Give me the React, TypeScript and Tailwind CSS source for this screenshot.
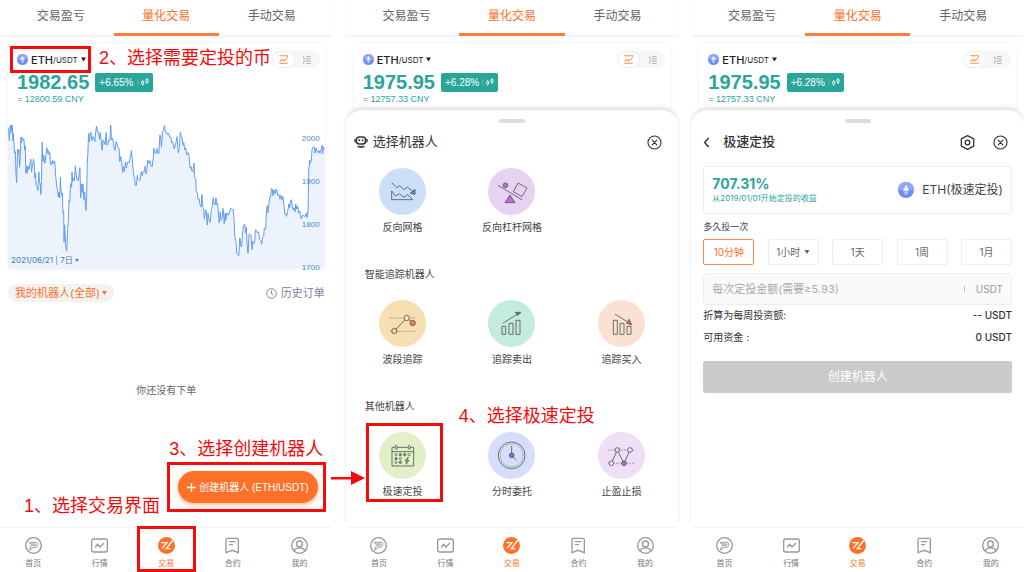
import React, { useState } from 'react';
import clsx from 'clsx';

const TABS = ['交易盈亏', '量化交易', '手动交易'];
const PRICE_LEVELS = ['2000', '1900', '1800', '1700'];
const INTERVALS = ['10分钟', '1小时', '1天', '1周', '1月'];

const PRICE_LINE =
  '22,52 24,62 26,92 29,46 31,68 33,45 35,46 36,68 37,92 38,70 40,98 42,130 44,125 46,190 48,219 50,150 51,118 53,130 55,119 57,172 59,140 61,81 63,98 65,83 68,90 70,87 72,120 74,108 76,190 78,168 80,190 82,168 85,180 88,162 91,148 93,186 96,165 99,148 101,160 103,205 105,190 107,228 110,230 112,242 115,186 117,215 119,222 121,254 123,215 125,97 127,155 130,136 133,160 136,140 139,113 142,130 144,122 146,135 148,128 150,160 153,166 156,152 158,162 160,153 163,155 166,200 169,230 172,245 174,262 176,246 178,264 180,202 182,246 184,256 186,250 188,310 190,305 191,396 193,345 196,405 199,424 202,360 204,330 206,272 208,278 210,235 212,220 214,232 215,186 217,215 220,206 222,212 225,168 228,196 231,210 234,212 236,195 239,173 241,264 244,222 246,248 248,222 251,270 253,246 257,302 259,262 261,160 263,130 265,70 267,96 270,72 272,66 275,92 278,80 281,82 284,95 286,72 289,48 292,66 295,66 298,88 300,68 303,90 306,122 309,90 312,96 315,104 318,68 320,104 323,104 326,90 329,92 332,45 334,90 337,84 340,100 343,118 345,122 348,95 351,102 354,112 357,118 359,155 362,140 365,158 368,188 370,170 373,184 376,156 379,174 383,156 388,158 391,140 394,122 397,150 399,175 402,200 404,204 406,226 409,226 412,196 414,208 418,212 420,212 424,185 427,198 430,184 434,184 435,168 438,192 441,182 443,150 447,160 450,152 453,168 457,170 460,144 462,115 465,130 468,130 471,116 474,130 477,131 480,75 482,78 485,112 488,65 491,62 494,46 496,66 500,66 503,74 506,70 510,82 513,82 516,98 519,96 523,117 526,108 529,96 532,80 534,116 536,129 539,112 542,66 544,80 547,82 549,106 552,98 555,120 558,114 561,134 565,128 568,140 571,175 574,170 577,184 580,184 583,160 585,202 588,206 590,245 593,250 595,268 598,266 600,280 604,292 607,254 609,290 612,296 614,328 618,300 620,306 623,346 625,310 629,334 632,338 635,300 638,290 641,264 644,284 647,284 649,264 652,284 654,280 657,316 659,340 662,306 665,332 668,324 670,296 672,310 674,342 677,310 679,332 682,310 686,316 689,310 693,296 697,298 701,300 704,330 706,382 709,392 712,430 715,434 718,438 721,384 725,412 727,405 730,362 733,345 736,344 738,370 741,352 743,402 746,431 749,374 752,374 755,376 758,420 760,395 763,402 766,398 768,360 771,362 774,370 778,366 781,390 784,392 787,404 790,382 793,380 795,355 799,358 802,300 804,288 806,308 808,292 811,262 814,262 817,236 819,238 821,258 824,240 827,252 830,238 833,240 836,258 839,254 842,268 845,256 848,270 851,260 854,284 857,314 860,312 862,320 865,308 869,282 872,294 874,272 877,270 879,288 882,300 885,294 888,306 890,282 893,298 896,290 899,310 902,304 904,318 907,328 910,316 914,318 918,320 922,310 924,324 927,300 929,180 932,150 934,160 937,152 939,118 943,110 946,112 948,130 951,114 954,124 957,128 960,122 963,130 966,120 969,106 971,132 973,110 975,116 977,116';

const EthIcon: React.FC<{ className?: string }> = ({ className }) => (
  <svg viewBox="0 0 24 24" className={className} aria-hidden="true">
    <circle cx="12" cy="12" r="12" fill="#6d8df8" />
    <path d="M0 12a12 12 0 0 1 24 0z" fill="#8ea6fb" />
    <path d="M12 4l4.500 8-4.500 2.500L7.500 12z" fill="#fff" fillOpacity="0.85" />
    <path d="M7.500 13.500L12 16l4.500-2.500L12 20z" fill="#fff" fillOpacity="0.7" />
  </svg>
);

const CaretIcon: React.FC<{ className?: string }> = ({ className }) => (
  <svg viewBox="0 0 10 8" className={className} fill="currentColor" aria-hidden="true">
    <path d="M0 0h10L5 8z" />
  </svg>
);

const CloseIcon: React.FC = () => (
  <svg viewBox="0 0 46 46" className="size-[15px]" fill="none" stroke="#333" strokeWidth="3.500" strokeLinecap="round">
    <circle cx="23" cy="23" r="20" />
    <path d="M16 16l14 14M30 16L16 30" />
  </svg>
);

const RobotIcon: React.FC = () => (
  <svg viewBox="0 0 40 36" className="h-[12px] w-[14px]" fill="none" stroke="#333" strokeLinecap="round" aria-hidden="true">
    <rect x="6" y="3" width="28" height="21" rx="9" strokeWidth="5" />
    <path d="M2 10v7M38 10v7" strokeWidth="4" />
    <path d="M10 31h20M14 35h12" strokeWidth="3" />
    <circle cx="15" cy="13" r="3" fill="#333" stroke="none" />
    <circle cx="25" cy="13" r="3" fill="#333" stroke="none" />
  </svg>
);

const NAV_ITEMS = [
  {
    label: '首页',
    icon: (
      <>
        <circle cx="25.500" cy="25.500" r="23.500" />
        <path d="M13 16h20c9 0 6 15-3 15h-7l-5 7h-5l7-13h11c3 0 3-4 0-4H16z" strokeWidth="3" />
      </>
    ),
  },
  {
    label: '行情',
    icon: (
      <>
        <rect x="2" y="6" width="47" height="39" rx="6" />
        <path d="M12 31l8-9 7 8 12-12" />
      </>
    ),
  },
  {
    label: '交易',
    icon: (
      <>
        <circle cx="25.500" cy="25.500" r="25.500" fill="#ff7128" stroke="none" />
        <path d="M10 17h17L12 34M45 9L25 35h12" stroke="#fff" strokeWidth="4" />
      </>
    ),
  },
  {
    label: '合约',
    icon: (
      <>
        <path d="M9 4h30a4 4 0 0 1 4 4v39l-18-7-19 7V8a4 4 0 0 1 3-4z" />
        <path d="M15 14h19M15 23h12" />
      </>
    ),
  },
  {
    label: '我的',
    icon: (
      <>
        <circle cx="25.500" cy="25.500" r="23.500" />
        <circle cx="25.500" cy="21" r="9" />
        <path d="M9 41c7-11 26-11 33 0" />
      </>
    ),
  },
];

const BottomNav: React.FC<{ marked?: boolean }> = ({ marked }) => (
  <nav className="grid h-[45px] grid-cols-5 border-t border-[#f5f5f5] bg-white">
    {NAV_ITEMS.map((item) => {
      const active = item.label === '交易';
      return (
        <a
          key={item.label}
          href="#"
          className={clsx(
            'relative flex flex-col items-center gap-[3px] pt-[9px] text-[8px] leading-[12px]',
            active ? 'text-[#ff7128]' : 'text-[#777]'
          )}
        >
          <svg viewBox="0 0 51 51" className="size-[17px]" fill="none" stroke="#999" strokeWidth="4">
            {item.icon}
          </svg>
          {item.label}
          {active && marked && <span className="absolute -top-[2px] bottom-0 inset-x-1 border-3 border-[#f50b0b]" />}
        </a>
      );
    })}
  </nav>
);

const TopTabs: React.FC = () => (
  <div className="grid h-9 grid-cols-3 border-b border-[#f3f3f3] px-2 shadow-[0_1px_3px_rgba(0,0,0,0.04)]">
    {TABS.map((tab) => (
      <button
        key={tab}
        type="button"
        className={clsx(
          'relative pb-1 text-[12px] leading-4',
          tab === '量化交易' ? 'text-[#ff7128]' : 'text-[#666]'
        )}
      >
        {tab}
        {tab === '量化交易' && <span className="absolute inset-x-0 -bottom-px h-[3px] bg-[#ff7d3a]" />}
      </button>
    ))}
  </div>
);

interface TickerProps {
  price: string;
  change: string;
  cny: string;
  marked?: boolean;
}

const Ticker: React.FC<TickerProps> = ({ price, change, cny, marked }) => (
  <div className="px-[9px] pt-[7px]">
    <div className="flex h-[17px] items-center justify-between">
      <button type="button" className="relative flex items-center text-[#222]" aria-haspopup="listbox">
        <EthIcon className="mr-[3px] size-[11px]" />
        <span className="text-[11px] leading-4 font-medium">ETH</span>
        <span className="pt-px text-[8px] leading-4">/USDT</span>
        <CaretIcon className="ml-[3px] h-[5px] w-[5px]" />
        {marked && <span className="absolute -inset-y-[5px] -right-[5px] -left-[7px] border-3 border-[#f50b0b]" />}
      </button>
      <div className="-mr-1 flex h-[17px] w-[48px] rounded-full bg-[#f6f6f6]">
        <button
          type="button"
          aria-label="走势图"
          className="flex w-[23px] items-center justify-center rounded-full border border-[#eee] bg-white"
        >
          <svg viewBox="0 0 26 26" className="size-[9px]" fill="none" stroke="#ff8a50" strokeWidth="3">
            <path d="M1 2h24v6M1 24h24M2 19l6-6 5 4 10-7" />
          </svg>
        </button>
        <button type="button" aria-label="盘口" className="flex flex-1 items-center justify-center">
          <svg viewBox="0 0 26 26" className="size-[8px]" fill="none" stroke="#aaa" strokeWidth="3">
            <path d="M2 1v7h5M10 2h15M10 9h15M1 16h24M2 25v-6M10 24h15" />
          </svg>
        </button>
      </div>
    </div>
    <div className="mt-[2px] flex h-6 items-center gap-[6px] font-['Liberation_Sans',sans-serif]">
      <span className="text-[20px] leading-6 font-bold text-[#2aa59a]">{price}</span>
      <span className="flex h-[19px] items-center gap-[3px] rounded-xs bg-[#2aa59a] px-1 text-[10px] text-white">
        {change}
        <svg viewBox="0 0 36 24" className="h-[8px] w-[12px]" fill="none" stroke="#fff" strokeWidth="3">
          <path d="M3 2v20" strokeOpacity="0.4" strokeWidth="2" />
          <rect x="14" y="10" width="6" height="9" rx="2" />
          <rect x="27" y="4" width="6" height="10" rx="2" />
          <path d="M17 6v4M17 19v4M30 0v4M30 14v4" strokeWidth="2" />
        </svg>
      </span>
    </div>
    <p className="font-['Liberation_Sans',sans-serif] text-[9px] leading-[10px] text-[#2aa59a]">= {cny} CNY</p>
  </div>
);

const Annotation: React.FC<{ className?: string; children: React.ReactNode }> = ({ className, children }) => (
  <p
    className={clsx(
      "absolute z-20 font-['Liberation_Sans','Noto_Sans_CJK_SC',sans-serif] text-[18px] leading-6 whitespace-nowrap text-[#f50b0b]",
      className
    )}
  >
    {children}
  </p>
);

const BOT_GROUPS = [
  {
    title: '',
    bots: [
      {
        name: '反向网格',
        circle: 'bg-[#cbdff6]',
        art: (
          <>
            <path d="M38 44l16 15 9-6 12 12 10-8 18 15M38 69l12 15 11-7 14 11 11-8 15 15H38z" />
            <path d="M108 64v15l-14-3z" fill="#4295f0" />
          </>
        ),
      },
      {
        name: '反向杠杆网格',
        circle: 'bg-[#e8d2f1]',
        art: (
          <>
            <path d="M30 52l73 44M90 45l27 15-15 26-26-15z" />
            <circle cx="52" cy="52" r="7" fill="#bd6ae4" />
            <path d="M66 81l15 23H51z" fill="#bd6ae4" />
          </>
        ),
      },
    ],
  },
  {
    title: '智能追踪机器人',
    bots: [
      {
        name: '波段追踪',
        circle: 'bg-[#f6dfb3]',
        art: (
          <>
            <path d="M31 54h80M31 94h80" strokeDasharray="3 2" strokeWidth="1.500" />
            <path d="M46 93l37-39 18 15" />
            <circle cx="46" cy="93" r="8" fill="#fbd48b" />
            <circle cx="83" cy="54" r="8" fill="#f8e6c4" />
            <circle cx="101" cy="69" r="8" fill="#ff7a45" />
          </>
        ),
      },
      {
        name: '追踪卖出',
        circle: 'bg-[#c3ebdf]',
        art: (
          <>
            <path d="M42 79h11v24H42zM63 70h12v33H63zM84 61h12v42H84zM44 70l50-31" />
            <path d="M82 37h17l-10 9z" fill="#2aa583" />
          </>
        ),
      },
      {
        name: '追踪买入',
        circle: 'bg-[#fbe0d4]',
        art: (
          <>
            <path d="M46 61h12v42H46zM66 70h12v33H66zM87 79h12v24H87zM51 42l49 31" />
            <path d="M93 58l8 16-15-4z" fill="#ef6a35" />
          </>
        ),
      },
    ],
  },
  {
    title: '其他机器人',
    bots: [
      {
        name: '极速定投',
        circle: 'bg-[#e2f0c9]',
        art: (
          <>
            <path d="M39 46h65v56H39zM39 59h65" />
            <rect x="49" y="40" width="6" height="12" rx="3" fill="#e2f0c9" />
            <rect x="88" y="40" width="6" height="12" rx="3" fill="#e2f0c9" />
            <g fill="#54a24b" strokeWidth="2">
              <circle cx="51" cy="68" r="3.500" fill="none" />
              <circle cx="64" cy="68" r="3.500" />
              <circle cx="77" cy="68" r="3.500" />
              <circle cx="90" cy="68" r="3.500" fill="none" />
              <circle cx="51" cy="80" r="3.500" />
              <circle cx="64" cy="80" r="3.500" fill="none" />
              <circle cx="51" cy="91" r="3.500" fill="none" />
              <circle cx="64" cy="91" r="3.500" />
            </g>
            <path d="M88 75l-10 12h6l-3 10 9-12h-6z" fill="#e2f0c9" />
          </>
        ),
      },
      {
        name: '分时委托',
        circle: 'bg-[#d6def9]',
        art: (
          <>
            <circle cx="71" cy="70" r="40" />
            <circle cx="71" cy="70" r="34" strokeDasharray="2 4" />
            <path d="M71 42v28l14 15" />
            <circle cx="71" cy="70" r="7" fill="#5b7ff5" />
          </>
        ),
      },
      {
        name: '止盈止损',
        circle: 'bg-[#eedff6]',
        art: (
          <>
            <path d="M30 54h81M30 94h81" strokeDasharray="5 3" strokeWidth="1.500" />
            <path d="M40 94l18-40 20 40 18-40" />
            <circle cx="58" cy="54" r="7" fill="#eed3f8" />
            <circle cx="96" cy="54" r="7" fill="#f4eaf9" />
            <circle cx="40" cy="94" r="7" fill="#f4eaf9" />
            <circle cx="78" cy="94" r="7" fill="#b964e0" />
          </>
        ),
      },
    ],
  },
];

const Sheet: React.FC<{ children: React.ReactNode }> = ({ children }) => (
  <section className="relative flex-1 rounded-t-2xl bg-white pt-[9px] shadow-[0_-3px_5px_-1px_rgba(0,0,0,0.14)]">
    <div className="mx-auto h-1 w-[26px] rounded-full bg-[#d9dbe6]" />
    {children}
  </section>
);

const OverviewScreen: React.FC = () => (
  <div className="flex flex-col">
    <TopTabs />
    <main className="relative flex-1 px-2 pt-2">
      <section className="relative rounded-sm shadow-[0_0_5px_rgba(0,0,0,0.06)]">
        <Ticker price="1982.65" change="+6.65%" cny="12800.59" marked />
        <Annotation className="top-[2px] left-[91px]">2、选择需要定投的币</Annotation>
        <div className="relative mt-4 h-[149px]">
          <svg viewBox="22 30 955 448" preserveAspectRatio="none" className="h-full w-full">
            <polygon points={`22,478 ${PRICE_LINE} 977,478`} fill="#ecf3fd" />
            <polyline points={PRICE_LINE} fill="none" stroke="#629bf5" strokeWidth="3" strokeLinejoin="round" />
          </svg>
          <div className="absolute top-[14px] right-[5px] flex flex-col gap-[33px] font-['Liberation_Sans',sans-serif] text-[8px] leading-[10px] text-[#5289bd]">
            {PRICE_LEVELS.map((level) => (
              <span key={level}>{level}</span>
            ))}
          </div>
          <div className="absolute bottom-[3px] left-[3px] flex items-center text-[8px] leading-3 text-[#3f7cb5]">
            <span>2021/06/21 |&nbsp;</span>
            <select aria-label="周期" className="appearance-none">
              <option>7日</option>
            </select>
            <CaretIcon className="ml-[2px] h-[3px] w-[4px]" />
          </div>
        </div>
      </section>

      <div className="mt-[15px] flex items-center justify-between">
        <div className="flex h-[18px] items-center rounded-full bg-[#f2f2f2] px-[7px] text-[11px] text-[#ff7128]">
          <select aria-label="机器人筛选" className="appearance-none">
            <option>我的机器人(全部)</option>
          </select>
          <CaretIcon className="ml-px h-1 w-[5px]" />
        </div>
        <a href="#" className="flex items-center gap-1 text-[11px] leading-4 text-[#7d82a0]">
          <svg viewBox="0 0 34 34" className="size-[11px]" fill="none" stroke="currentColor" strokeWidth="3">
            <circle cx="17" cy="17" r="15" />
            <path d="M17 8v10l6 4" />
          </svg>
          历史订单
        </a>
      </div>

      <p className="mt-20 text-center text-[10px] leading-4 text-[#666]">你还没有下单</p>

      <Annotation className="bottom-[9px] left-6">1、选择交易界面</Annotation>
      <div className="absolute right-[7px] bottom-[15px] border-3 border-[#f50b0b] py-[6px] pr-[5px] pl-2">
        <Annotation className="bottom-full -left-px mb-1">3、选择创建机器人</Annotation>
        <button
          type="button"
          className="flex h-8 items-center gap-[3px] rounded-full bg-[#ff7128] px-[9px] text-[10px] whitespace-nowrap text-white shadow-[0_2px_5px_rgba(255,113,40,0.5)]"
        >
          <svg viewBox="0 0 10 10" className="size-[9px]" stroke="#fff" strokeWidth="1.500">
            <path d="M5 0v10M0 5h10" />
          </svg>
          <span className="font-['Liberation_Sans','Noto_Sans_CJK_SC',sans-serif]">创建机器人 (ETH/USDT)</span>
        </button>
        <svg
          viewBox="0 0 34 16"
          className="absolute bottom-[31px] left-full z-20 ml-2 h-4 w-[34px] translate-y-1/2"
          fill="#f50b0b"
          aria-hidden="true"
        >
          <path d="M0 7h20V1l14 7-14 7V9.500H0z" />
        </svg>
      </div>
    </main>
    <BottomNav marked />
  </div>
);

const PickBotScreen: React.FC = () => (
  <div className="flex flex-col">
    <TopTabs />
    <main className="flex flex-1 flex-col pt-2">
      <div className="mx-2 rounded-sm pb-[6px] shadow-[0_0_5px_rgba(0,0,0,0.06)]">
        <Ticker price="1975.95" change="+6.28%" cny="12757.33" />
      </div>
      <Sheet>
        <div className="mt-[9px] flex h-5 items-center justify-between pr-4 pl-2">
          <h2 className="flex items-center gap-[5px] text-[13px] text-[#333]">
            <RobotIcon />
            选择机器人
          </h2>
          <button type="button" aria-label="关闭">
            <CloseIcon />
          </button>
        </div>
        <div className="relative mt-4 flex flex-col gap-[31px] px-[2px]">
          {BOT_GROUPS.map((group, i) => (
            <div key={i}>
              {group.title && (
                <h3 className="mb-[18px] pl-[17px] text-[10px] leading-4 text-[#444]">{group.title}</h3>
              )}
              <div className="grid grid-cols-3">
                {group.bots.map((bot) => (
                  <button
                    key={bot.name}
                    type="button"
                    className="relative flex flex-col items-center gap-1 text-[10px] leading-4 text-[#444]"
                  >
                    <span className={clsx('size-[47px] rounded-full', bot.circle)}>
                      <svg viewBox="0 0 141 141" fill="none" stroke="#555" strokeWidth="2.500">
                        {bot.art}
                      </svg>
                    </span>
                    {bot.name}
                    {bot.name === '极速定投' && (
                      <span className="absolute -top-[9px] -bottom-[3px] left-[18px] w-[77px] border-3 border-[#f50b0b]" />
                    )}
                  </button>
                ))}
              </div>
            </div>
          ))}
          <Annotation className="bottom-[71px] left-[113px]">4、选择极速定投</Annotation>
        </div>
      </Sheet>
    </main>
    <BottomNav />
  </div>
);

const InvestScreen: React.FC = () => {
  const [interval, setInterval] = useState('10分钟');
  const [amount, setAmount] = useState('');

  return (
    <div className="flex flex-col">
      <TopTabs />
      <main className="flex flex-1 flex-col pt-2">
        <div className="mx-2 rounded-sm pb-[6px] shadow-[0_0_5px_rgba(0,0,0,0.06)]">
          <Ticker price="1975.95" change="+6.28%" cny="12757.33" />
        </div>
        <Sheet>
          <div className="mt-[9px] flex h-5 items-center pr-4 pl-3">
            <button type="button" aria-label="返回">
              <svg viewBox="0 0 18 30" className="h-[11px] w-[7px]" fill="none" stroke="#333" strokeWidth="4">
                <path d="M15 3L4 15l11 12" />
              </svg>
            </button>
            <h2 className="ml-[13px] flex-1 text-[13px] font-medium text-[#333]">极速定投</h2>
            <button type="button" aria-label="设置" className="mr-[18px]">
              <svg viewBox="0 0 46 46" className="size-[15px]" fill="none" stroke="#333" strokeWidth="4" strokeLinejoin="round">
                <path d="M23 2l19 10v22L23 44 4 34V12z" />
                <circle cx="23" cy="23" r="7" />
              </svg>
            </button>
            <button type="button" aria-label="关闭">
              <CloseIcon />
            </button>
          </div>

          <form className="mt-[14px] px-3" onSubmit={(e) => e.preventDefault()}>
            <div className="flex h-12 items-center justify-between rounded-xs border border-[#eee] px-2">
              <div className="text-[#2aa59a]">
                <p className="text-[14px] leading-4 font-bold">707.31%</p>
                <p className="text-[8px] leading-3">从2019/01/01开始定投的收益</p>
              </div>
              <div className="flex items-center gap-2 text-[12px] text-[#444]">
                <EthIcon className="size-4" />
                ETH(极速定投)
              </div>
            </div>

            <p className="mt-[5px] text-[9px] leading-4 text-[#444]">多久投一次</p>
            <div className="mt-1 flex justify-between text-[10px]" role="group" aria-label="多久投一次">
              {INTERVALS.map((item) =>
                item === '1小时' ? (
                  <div
                    key={item}
                    className="flex h-[26px] w-[51px] items-center justify-center rounded-xs border border-[#eee] text-[#666]"
                  >
                    <select aria-label="小时间隔" className="appearance-none">
                      <option>{item}</option>
                    </select>
                    <CaretIcon className="ml-[3px] h-1 w-[6px]" />
                  </div>
                ) : (
                  <button
                    key={item}
                    type="button"
                    onClick={() => setInterval(item)}
                    className={clsx(
                      'h-[26px] w-[51px] rounded-xs border',
                      interval === item ? 'border-[#ff8a50] text-[#ff7128]' : 'border-[#eee] text-[#666]'
                    )}
                  >
                    {item}
                  </button>
                )
              )}
            </div>

            <div className="mt-2 flex h-8 items-center rounded-sm border border-[#eee] bg-[#fafafa] px-2 text-[#999]">
              <label htmlFor="amount" className="sr-only">
                每次定投金额
              </label>
              <input
                id="amount"
                value={amount}
                onChange={(e) => setAmount(e.target.value)}
                placeholder="每次定投金额(需要≥5.93)"
                className="h-6 min-w-0 flex-1 text-[11px] leading-6 outline-none placeholder:text-[#aaa]"
              />
              <span className="mr-[11px] h-[6px] w-px bg-[#bbb]" />
              <span className="text-[10px]">USDT</span>
            </div>

            <dl className="mt-[2px] grid grid-cols-2 gap-y-[6px] text-[10px] leading-4 text-[#333]">
              <dt>折算为每周投资额:</dt>
              <dd className="text-right font-medium">-- USDT</dd>
              <dt>可用资金 :</dt>
              <dd className="text-right font-medium">0 USDT</dd>
            </dl>

            <button type="submit" className="mt-4 h-8 w-full rounded-xs bg-[#cacaca] text-[12px] text-white">
              创建机器人
            </button>
          </form>
        </Sheet>
      </main>
      <BottomNav />
    </div>
  );
};

export default function App() {
  return (
    <div className="grid min-h-screen grid-cols-3 gap-[13px] bg-white font-[Inter,'Noto_Sans_CJK_SC',sans-serif]">
      <OverviewScreen />
      <PickBotScreen />
      <InvestScreen />
    </div>
  );
}
